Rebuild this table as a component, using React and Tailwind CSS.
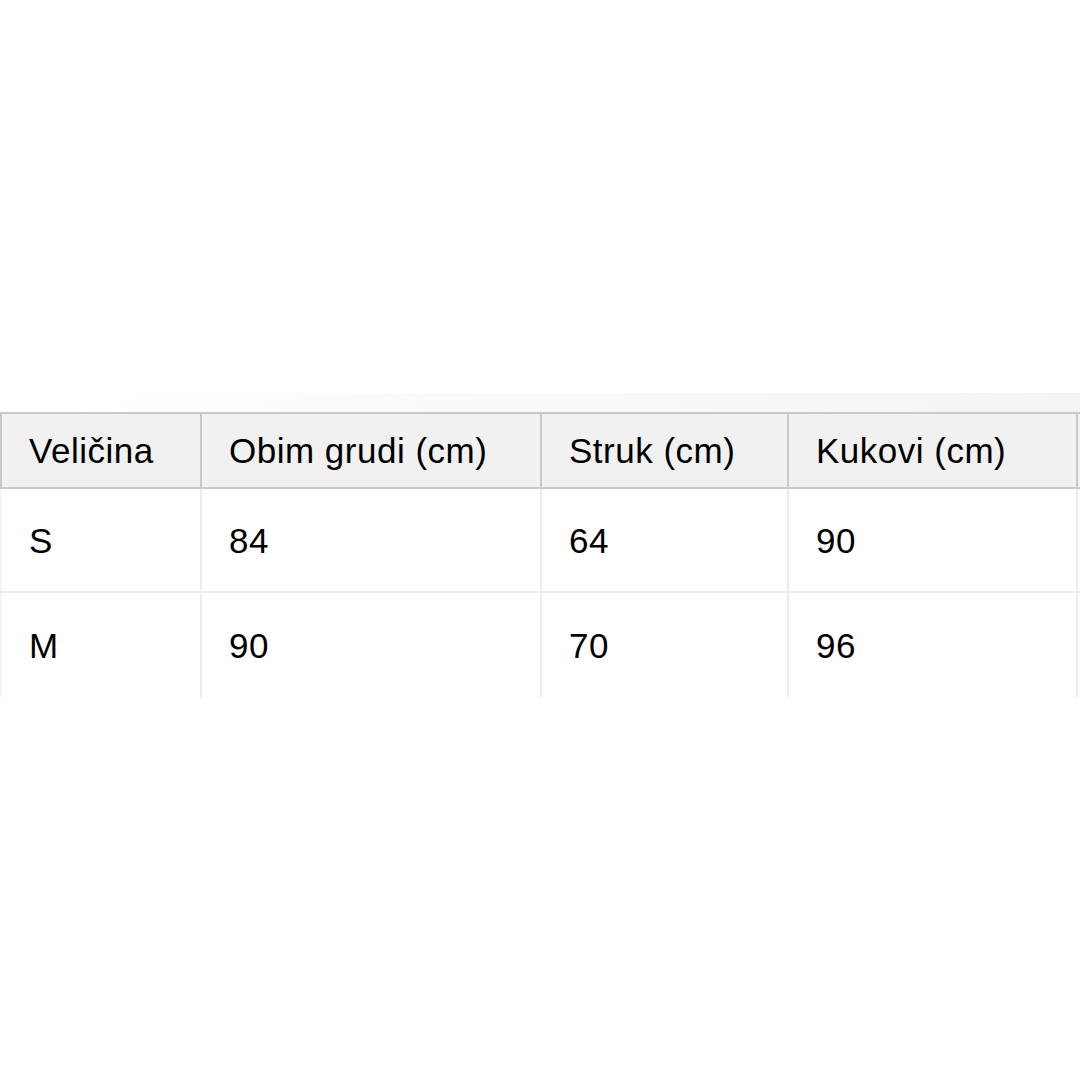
const headers = ['Veličina', 'Obim grudi (cm)', 'Struk (cm)', 'Kukovi (cm)'];
const rows = [
  ['S', '84', '64', '90'],
  ['M', '90', '70', '96'],
];

export default function App() {
  return (
    <div
      className="w-[1080px] h-[1080px] bg-white overflow-hidden text-black"
      style={{ fontFamily: '"Liberation Sans", Arial, sans-serif' }}
    >
      <div className="h-[393px]" />
      {/* faint shadow band above header */}
      <div className="h-[19px] bg-gradient-to-r from-white via-[#fafafa] to-[#f4f4f4]" />

      {/* Header */}
      <div className="grid grid-cols-[200px_340px_247px_289px_1fr] h-[77px] bg-[#f1f1f1] border-t-2 border-b-2 border-[#c9c9c9]">
        {headers.map((h) => (
          <div
            key={h}
            className="flex items-center pl-[27px] text-[35px] tracking-[0.5px] leading-none border-l-2 border-[#c9c9c9]"
          >
            {h}
          </div>
        ))}
        <div className="border-l-2 border-[#c9c9c9]" />
      </div>

      {/* Body */}
      {rows.map((r, ri) => (
        <div
          key={ri}
          className={`grid grid-cols-[200px_340px_247px_289px_1fr] h-[104px] ${ri === 0 ? 'border-b-2 border-[#ececec]' : ''}`}
        >
          {r.map((c, ci) => (
            <div
              key={ci}
              className={`flex items-center pl-[27px] text-[35px] tracking-[0.5px] leading-none ${ci === 0 ? 'border-l-2 border-[#f5f5f5]' : 'border-l-2 border-[#ececec]'}`}
            >
              {c}
            </div>
          ))}
          <div className="border-l-2 border-[#ececec]" />
        </div>
      ))}
    </div>
  );
}
